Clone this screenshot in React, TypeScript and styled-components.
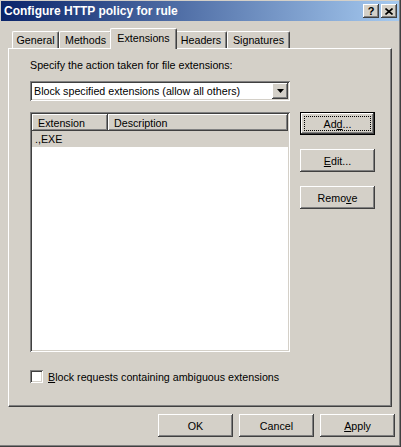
import React from "react";
import styled, { createGlobalStyle } from "styled-components";

const GlobalStyle = createGlobalStyle`
  html, body {
    margin: 0;
    padding: 0;
    background: #d4d0c8;
  }
  body {
    font-family: "Liberation Sans", Arial, sans-serif;
    font-size: 10.7px;
    color: #000;
  }
`;

const raised = `
  box-shadow: inset -1px -1px 0 #404040, inset 1px 1px 0 #ffffff,
    inset -2px -2px 0 #808080, inset 2px 2px 0 #d4d0c8;
`;

const sunken = `
  box-shadow: inset 1px 1px 0 #808080, inset -1px -1px 0 #ffffff,
    inset 2px 2px 0 #404040, inset -2px -2px 0 #d4d0c8;
`;

const Window = styled.div`
  width: 401px;
  height: 447px;
  box-sizing: border-box;
  padding: 1px 2px 2px 1px;
  background: #d4d0c8;
  box-shadow: inset -1px -1px 0 #404040, inset -2px -2px 0 #808080;
  display: flex;
  flex-direction: column;
`;

const TitleBar = styled.div`
  height: 20px;
  display: flex;
  align-items: center;
  justify-content: space-between;
  padding: 0 2px 0 3px;
  background: linear-gradient(to right, #0a246a, #a6caf0);
`;

const TitleText = styled.span`
  color: #fff;
  font-weight: bold;
  font-size: 12px;
  white-space: nowrap;
`;

const CaptionButtons = styled.div`
  display: flex;
  gap: 2px;
`;

const CaptionButton = styled.div`
  width: 16px;
  height: 14px;
  box-sizing: border-box;
  background: #d4d0c8;
  ${raised}
  display: flex;
  align-items: center;
  justify-content: center;
  font-weight: bold;
  font-size: 11px;
  line-height: 14px;
`;

const Body = styled.div`
  flex: 1;
  display: flex;
  flex-direction: column;
  padding: 7px 0 0 7px;
`;

const TabStrip = styled.div`
  height: 20px;
  display: flex;
  align-items: flex-end;
  padding-left: 4px;
`;

const Tab = styled.div<{ $width: number; $active?: boolean }>`
  width: ${(p) => p.$width}px;
  height: ${(p) => (p.$active ? 21 : 17)}px;
  margin: ${(p) => (p.$active ? "0 -2px -1px -2px" : "0")};
  padding-bottom: ${(p) => (p.$active ? 3 : 0)}px;
  box-sizing: border-box;
  position: relative;
  z-index: ${(p) => (p.$active ? 1 : 0)};
  flex: none;
  background: #d4d0c8;
  border-top: 1px solid #fff;
  border-left: 1px solid #fff;
  border-right: 1px solid #404040;
  border-radius: 2px 2px 0 0;
  box-shadow: inset -1px 0 0 #808080;
  display: flex;
  align-items: center;
  justify-content: center;
  white-space: nowrap;
`;

const Panel = styled.div`
  width: 384px;
  height: 359px;
  box-sizing: border-box;
  border-top: 1px solid #fff;
  border-left: 1px solid #fff;
  border-right: 1px solid #404040;
  border-bottom: 1px solid #404040;
  box-shadow: inset -1px -1px 0 #808080;
  padding: 10px 0 0 21px;
  display: flex;
  flex-direction: column;
`;

const Label = styled.div`
  line-height: 13px;
  height: 13px;
`;

const Combo = styled.div`
  margin-top: 9px;
  width: 260px;
  height: 20px;
  box-sizing: border-box;
  padding: 2px;
  background: #fff;
  ${sunken}
  display: flex;
  align-items: center;
`;

const ComboText = styled.div`
  flex: 1;
  padding-left: 2px;
  white-space: nowrap;
`;

const ComboArrow = styled.div`
  width: 16px;
  height: 16px;
  box-sizing: border-box;
  background: #d4d0c8;
  ${raised}
  display: flex;
  align-items: center;
  justify-content: center;
`;

const ListRow = styled.div`
  margin-top: 11px;
  display: flex;
  gap: 10px;
`;

const ListView = styled.div`
  width: 260px;
  height: 240px;
  box-sizing: border-box;
  padding: 2px;
  background: #fff;
  ${sunken}
  display: flex;
  flex-direction: column;
`;

const HeaderRow = styled.div`
  display: flex;
  height: 17px;
`;

const HeaderCell = styled.div<{ $width?: number }>`
  ${(p) => (p.$width ? `width: ${p.$width}px;` : "flex: 1;")}
  box-sizing: border-box;
  background: #d4d0c8;
  ${raised}
  padding-left: 6px;
  display: flex;
  align-items: center;
  white-space: nowrap;
`;

const ItemRow = styled.div<{ $selected?: boolean }>`
  height: 16px;
  padding-left: 3px;
  display: flex;
  align-items: center;
  background: ${(p) => (p.$selected ? "#d4d0c8" : "transparent")};
`;

const ButtonColumn = styled.div`
  display: flex;
  flex-direction: column;
  gap: 14px;
`;

const Button = styled.div<{ $default?: boolean }>`
  width: 75px;
  height: 23px;
  box-sizing: border-box;
  background: #d4d0c8;
  border: ${(p) => (p.$default ? "1px solid #000" : "none")};
  ${raised}
  display: flex;
  align-items: center;
  justify-content: center;
  white-space: nowrap;
  position: relative;
`;

const FocusRect = styled.div`
  position: absolute;
  inset: 3px;
  border: 1px dotted #000;
`;

const CheckRow = styled.div`
  margin-top: 18px;
  display: flex;
  align-items: center;
  gap: 5px;
`;

const CheckBox = styled.div`
  width: 13px;
  height: 13px;
  box-sizing: border-box;
  background: #fff;
  ${sunken}
`;

const Footer = styled.div`
  margin-top: 7px;
  display: flex;
  justify-content: flex-end;
  gap: 6px;
  padding-right: 4px;
`;

export default function App() {
  return (
    <>
      <GlobalStyle />
      <Window>
        <TitleBar>
          <TitleText>Configure HTTP policy for rule</TitleText>
          <CaptionButtons>
            <CaptionButton>?</CaptionButton>
            <CaptionButton>
              <svg width="8" height="7" viewBox="0 0 8 7">
                <path d="M0.5 0.5 L7.5 6.5 M7.5 0.5 L0.5 6.5" stroke="#000" strokeWidth="1.6" />
              </svg>
            </CaptionButton>
          </CaptionButtons>
        </TitleBar>
        <Body>
          <TabStrip>
            <Tab $width={47}>General</Tab>
            <Tab $width={53}>Methods</Tab>
            <Tab $width={67} $active>Extensions</Tab>
            <Tab $width={52}>Headers</Tab>
            <Tab $width={63}>Signatures</Tab>
          </TabStrip>
          <Panel>
            <Label>Specify the action taken for file extensions:</Label>
            <Combo>
              <ComboText>Block specified extensions (allow all others)</ComboText>
              <ComboArrow>
                <svg width="7" height="4" viewBox="0 0 7 4">
                  <path d="M0 0 H7 L3.5 4 Z" fill="#000" />
                </svg>
              </ComboArrow>
            </Combo>
            <ListRow>
              <ListView>
                <HeaderRow>
                  <HeaderCell $width={76}>Extension</HeaderCell>
                  <HeaderCell>Description</HeaderCell>
                </HeaderRow>
                <ItemRow $selected>.,EXE</ItemRow>
              </ListView>
              <ButtonColumn>
                <Button $default>
                  Ad<u>d</u>...
                  <FocusRect />
                </Button>
                <Button>
                  <u>E</u>dit...
                </Button>
                <Button>
                  Remo<u>v</u>e
                </Button>
              </ButtonColumn>
            </ListRow>
            <CheckRow>
              <CheckBox />
              <span>
                <u>B</u>lock requests containing ambiguous extensions
              </span>
            </CheckRow>
          </Panel>
          <Footer>
            <Button>OK</Button>
            <Button>Cancel</Button>
            <Button>
              <u>A</u>pply
            </Button>
          </Footer>
        </Body>
      </Window>
    </>
  );
}
